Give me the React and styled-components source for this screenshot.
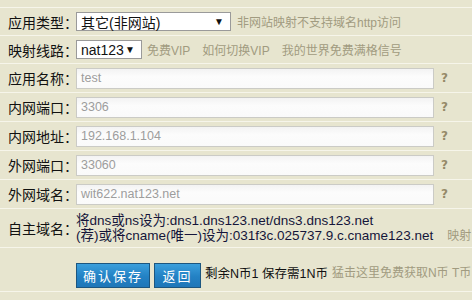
import styled, { createGlobalStyle } from "styled-components";

const Global = createGlobalStyle`
  html, body {
    margin: 0;
    padding: 0;
    background: #e7e5cf;
    overflow: hidden;
  }
  body {
    font-family: "Liberation Sans", "Noto Sans CJK SC", sans-serif;
    color: #111;
  }
`;

const Form = styled.div`
  margin-top: 7px;
  border-top: 1px solid #f6f5ea;
  width: 472px;
`;

const Row = styled.div`
  display: flex;
  align-items: ${(p) => (p.$top ? "flex-start" : "center")};
  height: ${(p) => p.$h || 28}px;
  padding-top: ${(p) => p.$pt || 0}px;
  box-sizing: border-box;
  border-bottom: 1px solid #f6f5ea;
  white-space: nowrap;
  & > * {
    flex-shrink: 0;
  }
`;

const Label = styled.div`
  width: 68px;
  padding-left: 8px;
  font-family: "Noto Sans CJK SC", sans-serif;
  font-size: 14px;
  color: #111;
  align-self: center;
`;

const Select = styled.div`
  display: flex;
  align-items: center;
  justify-content: space-between;
  box-sizing: border-box;
  width: ${(p) => p.$w}px;
  height: 19px;
  padding: 0 6px 0 4px;
  background: #fff;
  border: 1px solid #9a9a9a;
  font-family: "Liberation Sans", "Noto Sans CJK SC", sans-serif;
  font-size: 14px;
  color: #111;
`;

const Arrow = styled.span`
  font-size: 10px;
  color: #111;
`;

const Hint = styled.span`
  font-family: "Liberation Sans", "Noto Sans CJK SC", sans-serif;
  font-size: ${(p) => p.$fs || 12}px;
  color: #a19b80;
  margin-left: ${(p) => p.$ml || 0}px;
`;

const Input = styled.div`
  box-sizing: border-box;
  width: 358px;
  height: 21px;
  padding: 0 4px;
  display: flex;
  align-items: center;
  background: linear-gradient(#f3f3f3, #fcfcfc 40%, #fafafa);
  border: 1px solid #cbcbc6;
  font-size: 12.5px;
  color: #9d9d9d;
`;

const Help = styled.span`
  margin-left: 7px;
  font-family: "DejaVu Sans", sans-serif;
  font-weight: bold;
  font-size: 12px;
  color: #968a68;
`;

const TextBlock = styled.div`
  font-size: 13.5px;
  line-height: 15px;
  color: #15153a;
  padding-top: 4px;
`;

const Button = styled.button`
  box-sizing: border-box;
  height: 25px;
  width: ${(p) => p.$w}px;
  margin-right: 4px;
  padding: 0;
  border: 1px solid #1c5680;
  background: linear-gradient(#3b9fdc, #2381c4 55%, #1f77b8);
  color: #fff;
  font-family: "Noto Sans CJK SC", sans-serif;
  font-size: 13px;
  letter-spacing: 2px;
  cursor: pointer;
`;

const Note = styled.span`
  font-family: "Liberation Sans", "Noto Sans CJK SC", sans-serif;
  font-size: 12.5px;
  color: #111;
`;

const inputs = [
  ["应用名称", "test"],
  ["内网端口", "3306"],
  ["内网地址", "192.168.1.104"],
  ["外网端口", "33060"],
  ["外网域名", "wit622.nat123.net"],
];

export default function App() {
  return (
    <>
      <Global />
      <Form>
        <Row $h={28}>
          <Label>应用类型：</Label>
          <Select $w={155}>
            <span>其它(非网站)</span>
            <Arrow>▼</Arrow>
          </Select>
          <Hint $ml={6}>非网站映射不支持域名http访问</Hint>
        </Row>
        <Row $h={28}>
          <Label>映射线路：</Label>
          <Select $w={66}>
            <span>nat123</span>
            <Arrow>▼</Arrow>
          </Select>
          <Hint $ml={5}>免费VIP</Hint>
          <Hint $ml={12}>如何切换VIP</Hint>
          <Hint $ml={12}>我的世界免费满格信号</Hint>
        </Row>
        {inputs.map(([label, value]) => (
          <Row key={label} $h={29}>
            <Label>{label}：</Label>
            <Input>{value}</Input>
            <Help>?</Help>
          </Row>
        ))}
        <Row $h={39} $top>
          <Label>自主域名：</Label>
          <TextBlock>
            <div>将dns或ns设为:dns1.dns123.net/dns3.dns123.net</div>
            <div>
              (荐)或将cname(唯一)设为:031f3c.025737.9.c.cname123.net
              <Hint $ml={14} $fs={12}>
                映射
              </Hint>
            </div>
          </TextBlock>
        </Row>
        <Row $h={44} $pt={15} $top>
          <Label />
          <Button $w={74}>确认保存</Button>
          <Button $w={47}>返回</Button>
          <Note>剩余N币1 保存需1N币</Note>
          <Hint $ml={4} $fs={12}>
            猛击这里免费获取N币 T币
          </Hint>
        </Row>
      </Form>
    </>
  );
}
